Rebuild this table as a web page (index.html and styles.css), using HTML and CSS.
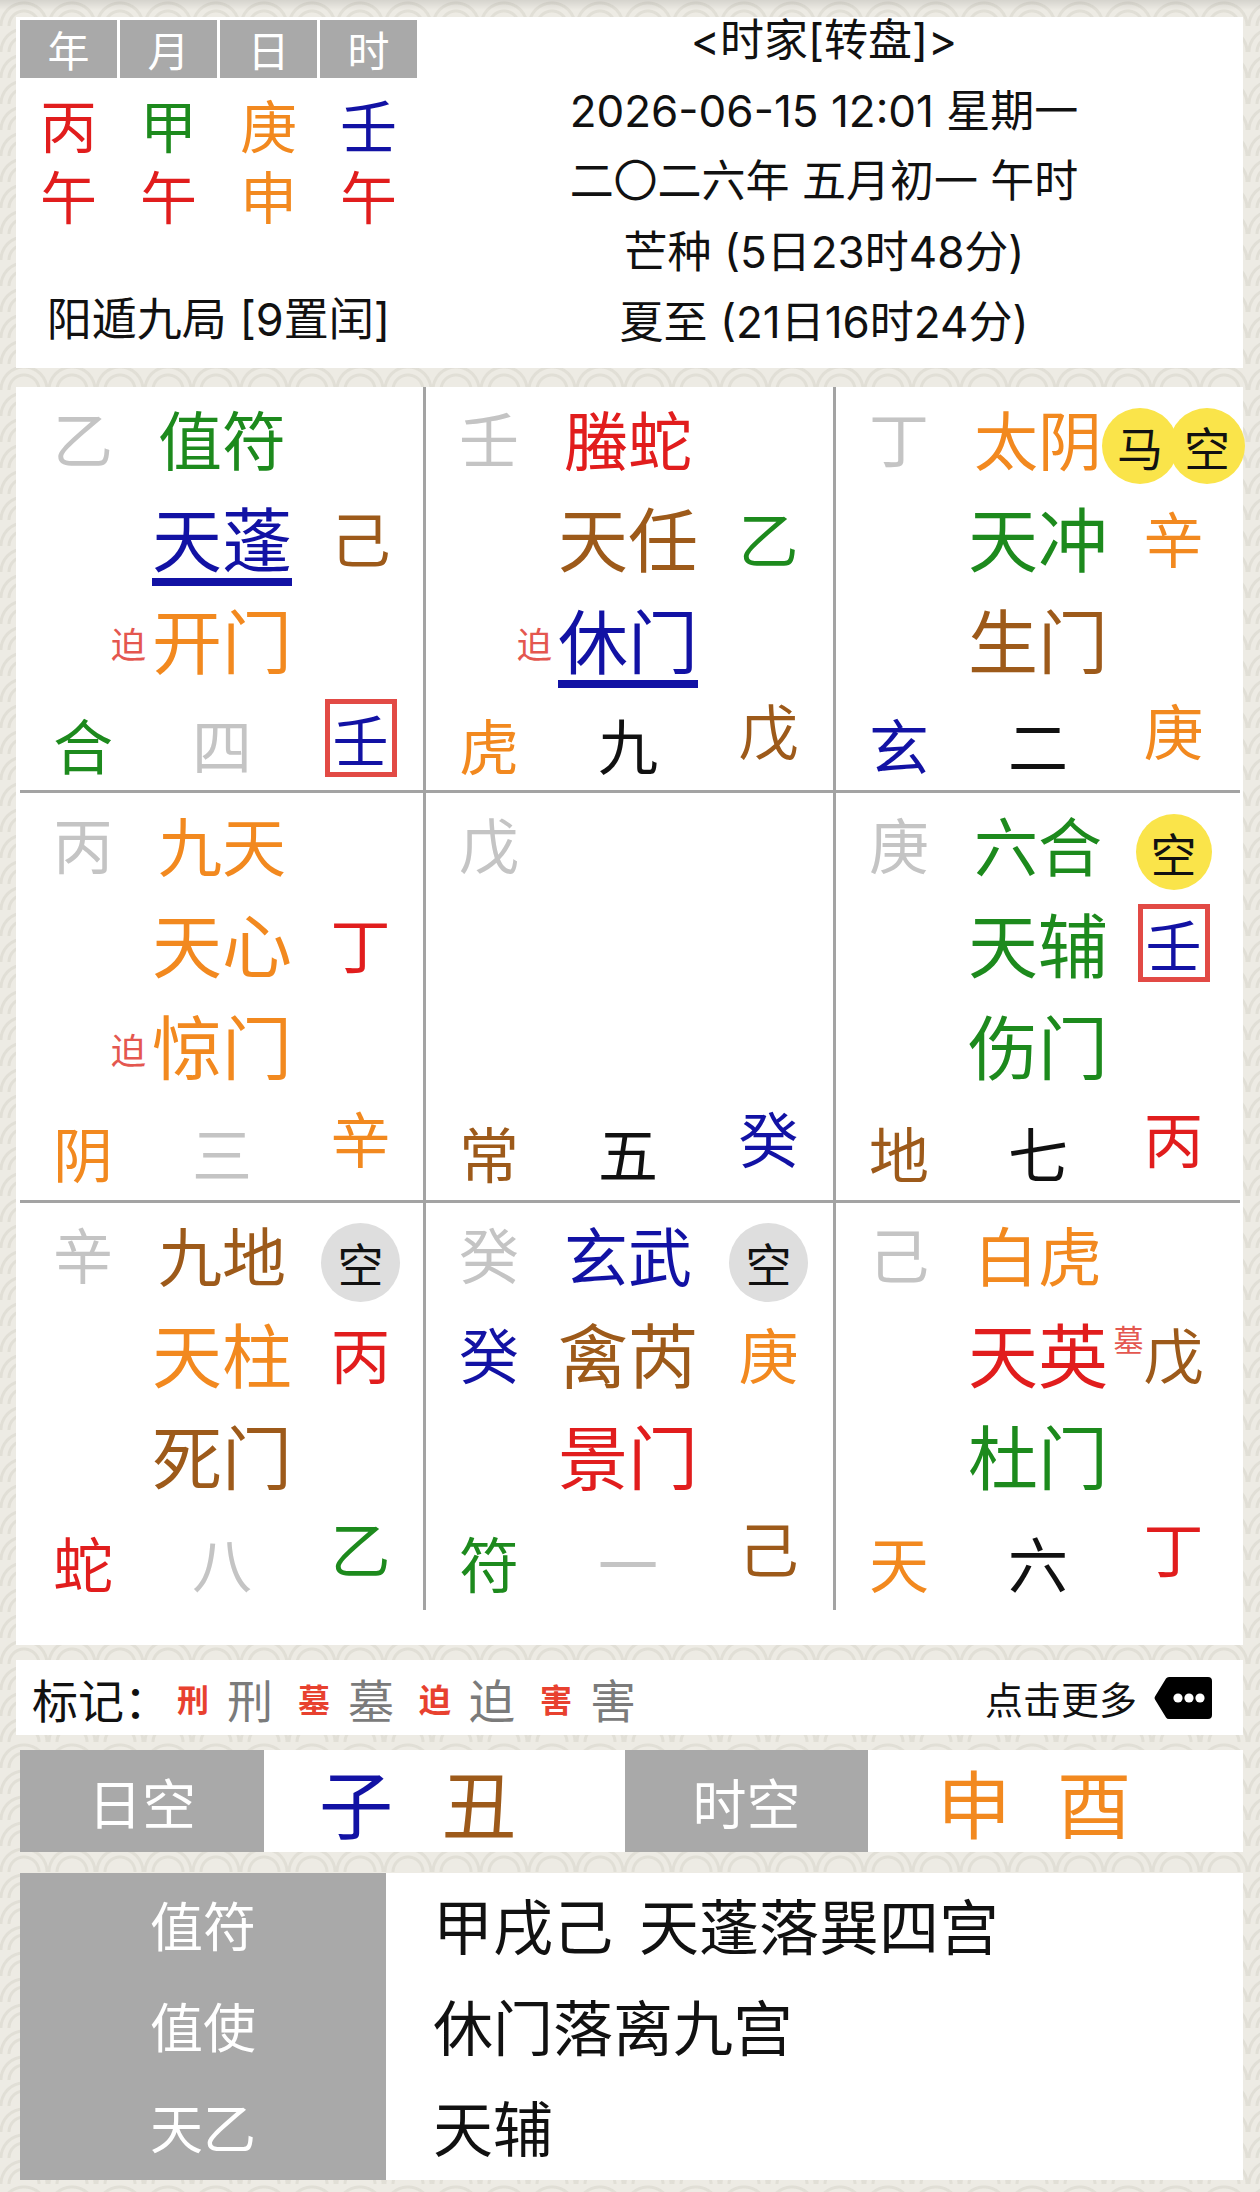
FILE: index.html
```html
<!DOCTYPE html>
<html lang="zh-CN">
<head>
<meta charset="utf-8">
<title>时家转盘</title>
<link rel="stylesheet" href="styles.css">
</head>
<body>
<div class="page">
  <section class="card head">
    <div class="pillars">
      <div class="ph">年</div><div class="ph">月</div><div class="ph">日</div><div class="ph">时</div>
      <div class="pc rd">丙</div><div class="pc gr">甲</div><div class="pc or">庚</div><div class="pc bl">壬</div>
      <div class="pc rd">午</div><div class="pc rd">午</div><div class="pc or">申</div><div class="pc rd">午</div>
      <div class="ju">阳遁九局 [9置闰]</div>
    </div>
    <div class="info">
      <p>&lt;时家[转盘]&gt;</p>
      <p>2026-06-15 12:01 星期一</p>
      <p>二〇二六年 五月初一 午时</p>
      <p>芒种 (5日23时48分)</p>
      <p>夏至 (21日16时24分)</p>
    </div>
  </section>

  <section class="card board">
    <div class="grid">
      <div class="cell">
        <span class="s gy">乙</span><span class="g gr">值符</span><span></span>
        <span></span><span class="x bl ul">天蓬</span><span class="s br">己</span>
        <span class="po">迫</span><span class="x or">开门</span><span></span>
        <span class="s gr d">合</span><span class="s gy d">四</span><span class="box bl d">壬</span>
      </div>
      <div class="cell">
        <span class="s gy">壬</span><span class="g rd">螣蛇</span><span></span>
        <span></span><span class="x br">天任</span><span class="s gr">乙</span>
        <span class="po">迫</span><span class="x bl ul">休门</span><span></span>
        <span class="s or d">虎</span><span class="s bk d">九</span><span class="s br up">戊</span>
      </div>
      <div class="cell">
        <span class="s gy">丁</span><span class="g or">太阴</span><span class="badges"><span class="badge yl">马</span><span class="badge yl">空</span></span>
        <span></span><span class="x gr">天冲</span><span class="s or">辛</span>
        <span></span><span class="x br">生门</span><span></span>
        <span class="s bl d">玄</span><span class="s bk d">二</span><span class="s or up">庚</span>
      </div>
      <div class="cell">
        <span class="s gy">丙</span><span class="g or">九天</span><span></span>
        <span></span><span class="x or">天心</span><span class="s rd">丁</span>
        <span class="po">迫</span><span class="x or">惊门</span><span></span>
        <span class="s or d">阴</span><span class="s gy d">三</span><span class="s or up">辛</span>
      </div>
      <div class="cell">
        <span class="s gy">戊</span><span></span><span></span>
        <span></span><span></span><span></span>
        <span></span><span></span><span></span>
        <span class="s br d">常</span><span class="s bk d">五</span><span class="s bl up">癸</span>
      </div>
      <div class="cell">
        <span class="s gy">庚</span><span class="g gr">六合</span><span class="badges"><span class="badge yl">空</span></span>
        <span></span><span class="x gr">天辅</span><span class="box bl">壬</span>
        <span></span><span class="x gr">伤门</span><span></span>
        <span class="s br d">地</span><span class="s bk d">七</span><span class="s rd up">丙</span>
      </div>
      <div class="cell">
        <span class="s gy">辛</span><span class="g br">九地</span><span class="badges"><span class="badge gyb">空</span></span>
        <span></span><span class="x or">天柱</span><span class="s rd">丙</span>
        <span></span><span class="x br">死门</span><span></span>
        <span class="s rd d">蛇</span><span class="s gy d">八</span><span class="s gr up">乙</span>
      </div>
      <div class="cell">
        <span class="s gy">癸</span><span class="g bl">玄武</span><span class="badges"><span class="badge gyb">空</span></span>
        <span class="s bl">癸</span><span class="x br">禽芮</span><span class="s or">庚</span>
        <span></span><span class="x rd">景门</span><span></span>
        <span class="s gr d">符</span><span class="s gy d">一</span><span class="s br up">己</span>
      </div>
      <div class="cell">
        <span class="s gy">己</span><span class="g or">白虎</span><span></span>
        <span></span><span class="x rd">天英</span><span class="s br"><span class="mu">墓</span>戊</span>
        <span></span><span class="x gr">杜门</span><span></span>
        <span class="s or d">天</span><span class="s bk d">六</span><span class="s rd up">丁</span>
      </div>
    </div>
  </section>

  <section class="card legend">
    <span class="lt">标记：</span>
    <span class="lr">刑</span><span class="lg">刑</span>
    <span class="lr">墓</span><span class="lg">墓</span>
    <span class="lr">迫</span><span class="lg">迫</span>
    <span class="lr">害</span><span class="lg">害</span>
    <span class="more">点击更多</span>
    <svg class="tag" width="60" height="44" viewBox="0 0 60 44">
      <path d="M16 1 H55 Q59 1 59 5 V39 Q59 43 55 43 H16 Q14 43 13 41.5 L2 23.5 Q1 22 2 20.5 L13 2.5 Q14 1 16 1 Z" fill="#000"/>
      <circle cx="25" cy="22" r="4.6" fill="#fff"/>
      <circle cx="36" cy="22" r="4.6" fill="#fff"/>
      <circle cx="47" cy="22" r="4.6" fill="#fff"/>
    </svg>
  </section>

  <section class="kong">
    <div class="kl k1">日空</div>
    <div class="kv kv1"><span class="bl kz">子</span><span class="br">丑</span></div>
    <div class="kl k2">时空</div>
    <div class="kv kv2"><span class="or kz">申</span><span class="or">酉</span></div>
  </section>

  <section class="summary">
    <div class="sl">值符</div><div class="sv">甲戌己<span class="sp"></span>天蓬落巽四宫</div>
    <div class="sl">值使</div><div class="sv">休门落离九宫</div>
    <div class="sl">天乙</div><div class="sv">天辅</div>
  </section>
</div>
</body>
</html>
```

FILE: styles.css
```css
html, body {
  margin: 0;
  padding: 0;
}
body {
  width: 1260px;
  height: 2192px;
  overflow: hidden;
  font-family: "Noto Sans CJK SC", "Noto Sans", sans-serif;
  color: #111;
  background-color: #edebe4;
  background-image:
    linear-gradient(to bottom, rgba(0,0,0,0.10), rgba(0,0,0,0) 10px),
    radial-gradient(circle at 50% 100%, transparent 0 13px, rgba(170,165,150,0.18) 14px 16px, transparent 17px 21px, rgba(170,165,150,0.18) 22px 24px, transparent 25px);
  background-size: 100% 20px, 48px 26px;
  background-repeat: no-repeat, repeat;
}
.page {
  padding: 17px 17px 0 16px;
}
.card {
  background: #fff;
  box-sizing: border-box;
}

/* ---------- header card ---------- */
.head {
  height: 351px;
  display: flex;
  padding: 3px 0 0 4px;
}
.pillars {
  width: 397px;
  flex: none;
  display: grid;
  grid-template-columns: repeat(4, 97px);
  grid-template-rows: 58px 81px 71px auto;
  column-gap: 3px;
}
.ph {
  background: #a9a9a9;
  color: #fff;
  font-size: 42px;
  line-height: 58px;
  text-align: center;
}
.pc {
  align-self: end;
  height: 71px;
  font-size: 57px;
  line-height: 71px;
  text-align: center;
}
.ju {
  grid-column: 1 / -1;
  margin-top: 60px;
  font-family: "Inter", "Noto Sans CJK SC", sans-serif;
  font-size: 45px;
  line-height: 60px;
  text-align: center;
  color: #111;
  white-space: nowrap;
}
.info {
  flex: 1;
  text-align: center;
  font-family: "Inter", "Noto Sans CJK SC", sans-serif;
  font-size: 44px;
  line-height: 70.5px;
  margin-top: -15px;
  padding-right: 12px;
}
.info p {
  margin: 0;
  white-space: nowrap;
}

/* ---------- board ---------- */
.board {
  margin-top: 19px;
  height: 1258px;
  padding: 0 3px 35px 4px;
}
.grid {
  display: grid;
  grid-template-columns: 406px 410px 1fr;
  grid-template-rows: 406px 410px 1fr;
  height: 100%;
}
.cell {
  box-sizing: border-box;
  border-right: 3px solid #a3a3a3;
  border-bottom: 3px solid #a3a3a3;
  display: grid;
  grid-template-columns: 126px 152px 1fr;
  grid-template-rows: 100px 100px 103px 1fr;
  align-items: center;
  justify-items: center;
}
.cell:nth-child(3n) {
  border-right: none;
  grid-template-columns: 126px 152px 119px;
}
.cell:nth-child(n+7) { border-bottom: none; }

.s, .g, .x, .po, .box {
  display: inline-block;
  line-height: 1;
  white-space: nowrap;
}
.s { font-size: 60px; }
.g { font-size: 64px; }
.x { font-size: 70px; }
.d { margin-top: 8px; }
.up { margin-bottom: 22px; }
.ul {
  text-decoration: underline;
  text-decoration-thickness: 8px;
  text-underline-offset: 11px;
  text-decoration-skip-ink: none;
}
.po {
  font-size: 35px;
  color: #e4574f;
  justify-self: end;
  margin-right: 0;
  margin-top: 8px;
}
.box {
  font-size: 56px;
  width: 62px;
  height: 68px;
  line-height: 68px;
  text-align: center;
  border: 5px solid #e24a45;
}
.box.d { margin-top: 0; margin-bottom: 4px; }
.mu {
  display: inline-block;
  font-size: 30px;
  line-height: 1;
  color: #e4574f;
  vertical-align: top;
  width: 30px;
  margin-left: -30px;
}
.badges {
  display: flex;
  margin-top: 18px;
}
.badge {
  width: 76px;
  height: 76px;
  border-radius: 50%;
  display: flex;
  align-items: center;
  justify-content: center;
  font-size: 46px;
  line-height: 1;
  color: #111;
  flex: none;
}
.badge + .badge { margin-left: -9px; }
.gyb { width: 79px; height: 79px; background: #dedede; }
.yl { background: #fae44a; }

/* colours */
.gy { color: #c4c4c4; }
.gr { color: #1d8a1d; }
.rd { color: #e11d1d; }
.or { color: #f2891f; }
.br { color: #9d5a1a; }
.bl { color: #1212a4; }
.bk { color: #111; }

/* ---------- legend ---------- */
.legend {
  margin-top: 15px;
  height: 75px;
  display: flex;
  align-items: center;
  padding: 0 30px 0 16px;
}
.lt {
  font-size: 46px;
  line-height: 1;
  color: #111;
  margin-right: 7px;
}
.lr {
  font-size: 32px;
  font-weight: 700;
  line-height: 1;
  color: #e8412f;
  margin-right: 18px;
}
.lg {
  font-size: 46px;
  line-height: 1;
  color: #7b7b7b;
  margin-right: 25px;
}
.more {
  margin-left: auto;
  font-size: 38px;
  line-height: 1;
  color: #111;
  margin-right: 16px;
}
.tag { display: block; }

/* ---------- kong row ---------- */
.kong {
  margin-top: 15px;
  margin-left: 4px;
  height: 102px;
  display: flex;
  background: #fff;
}
.kl {
  background: #a9a9a9;
  color: #fff;
  font-size: 54px;
  display: flex;
  align-items: center;
  justify-content: center;
}
.k1 { width: 244px; }
.k2 { width: 243px; }
.kv {
  display: flex;
  align-items: center;
  font-size: 74px;
  line-height: 1;
}
.kv1 { width: 361px; padding-left: 55px; box-sizing: border-box; }
.kv2 { flex: 1; padding-left: 69px; }
.kv1 .kz { margin-right: 49px; }
.kv2 .kz { margin-right: 46px; }

/* ---------- summary ---------- */
.summary {
  margin-top: 21px;
  margin-left: 4px;
  height: 307px;
  display: grid;
  grid-template-columns: 366px 1fr;
  grid-template-rows: 101px 101px 101px 1fr;
  background: linear-gradient(to right, #a9a9a9 366px, #fff 366px);
}
.sl {
  color: #fff;
  font-size: 53px;
  display: flex;
  align-items: center;
  justify-content: center;
}
.sv {
  color: #111;
  font-size: 60px;
  display: flex;
  align-items: center;
  padding-left: 47px;
  white-space: nowrap;
}
.sp {
  display: inline-block;
  width: 26px;
}
```
